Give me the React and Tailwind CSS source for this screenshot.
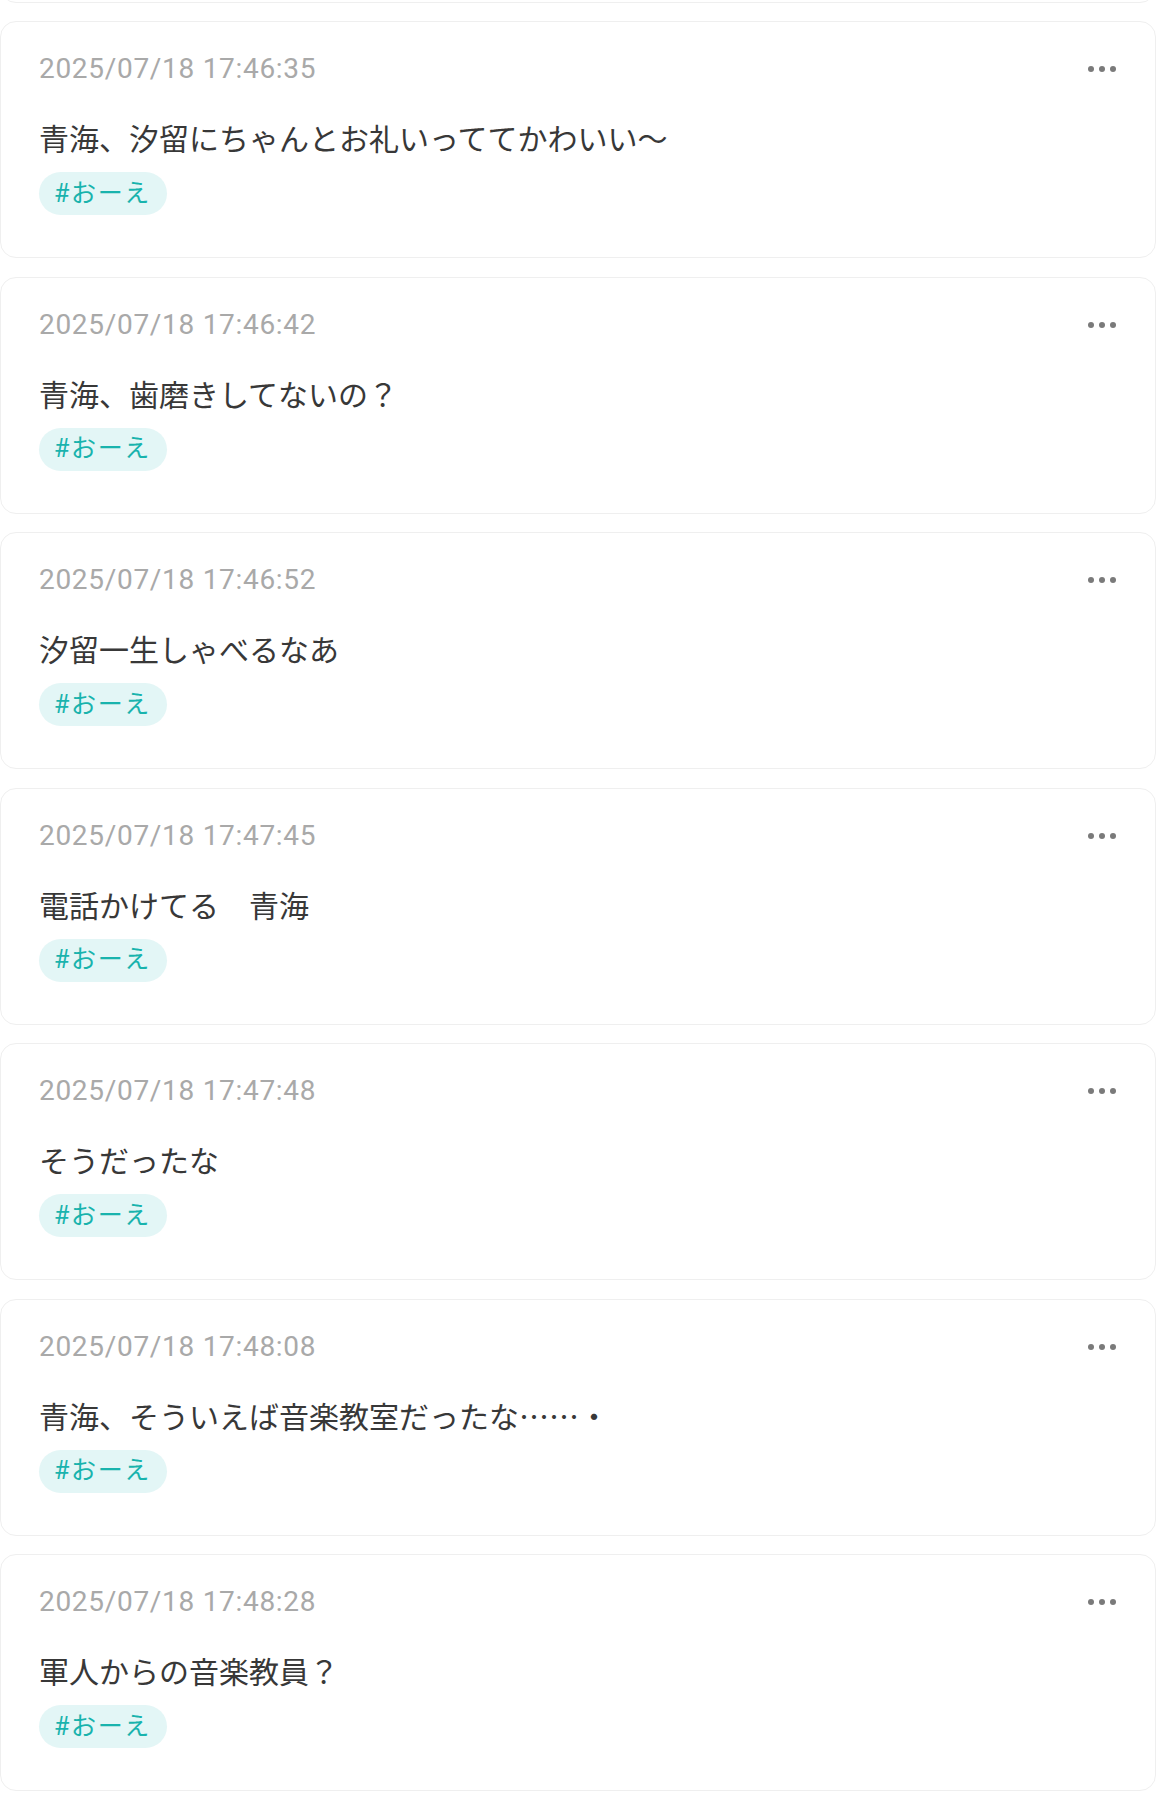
import React from "react";

const posts = [
  { time: "2025/07/18 17:46:25", text: "\u00a0", hidden: true },
  { time: "2025/07/18 17:46:35", text: "青海、汐留にちゃんとお礼いっててかわいい〜" },
  { time: "2025/07/18 17:46:42", text: "青海、歯磨きしてないの？" },
  { time: "2025/07/18 17:46:52", text: "汐留一生しゃべるなあ" },
  { time: "2025/07/18 17:47:45", text: "電話かけてる　青海" },
  { time: "2025/07/18 17:47:48", text: "そうだったな" },
  { time: "2025/07/18 17:48:08", text: "青海、そういえば音楽教室だったな……・" },
  { time: "2025/07/18 17:48:28", text: "軍人からの音楽教員？" },
];

function Card({ time, text, hidden }) {
  return (
    <div className="h-[237px] rounded-[16px] border border-[#efefef] bg-white px-[38px] pt-[27px]">
      <div className={hidden ? "invisible" : ""}>
        <div className="flex items-center justify-between">
          <span className="text-[28px] leading-[40px] tracking-[0.025em] text-[#a9a9a9]">{time}</span>
          <div className="flex items-center gap-[5px] pr-[1px]">
            <span className="block h-[6px] w-[6px] rounded-full bg-[#7a7a7a]" />
            <span className="block h-[6px] w-[6px] rounded-full bg-[#7a7a7a]" />
            <span className="block h-[6px] w-[6px] rounded-full bg-[#7a7a7a]" />
          </div>
        </div>
        <p
          className="mt-[27px] text-[30px] leading-[42px] text-[#383838]"
          style={{ fontFamily: "'Noto Sans CJK JP', Roboto, sans-serif" }}
        >
          {text}
        </p>
        <div className="mt-[14px] flex">
          <span className="flex h-[43px] items-center rounded-full bg-[#e3f6f6] pl-[15px] pr-[16px] text-[25px] tracking-[0.065em] text-[#19b3ad]">#おーえ</span>
        </div>
      </div>
    </div>
  );
}

export default function App() {
  return (
    <div
      className="min-h-[1793px] overflow-hidden bg-white"
      style={{ fontFamily: "Roboto, 'Noto Sans CJK JP', sans-serif" }}
    >
      <div className="-mt-[234.5px] flex flex-col gap-[18.5px]">
        {posts.map((p, i) => (
          <Card key={i} time={p.time} text={p.text} hidden={p.hidden} />
        ))}
      </div>
    </div>
  );
}
